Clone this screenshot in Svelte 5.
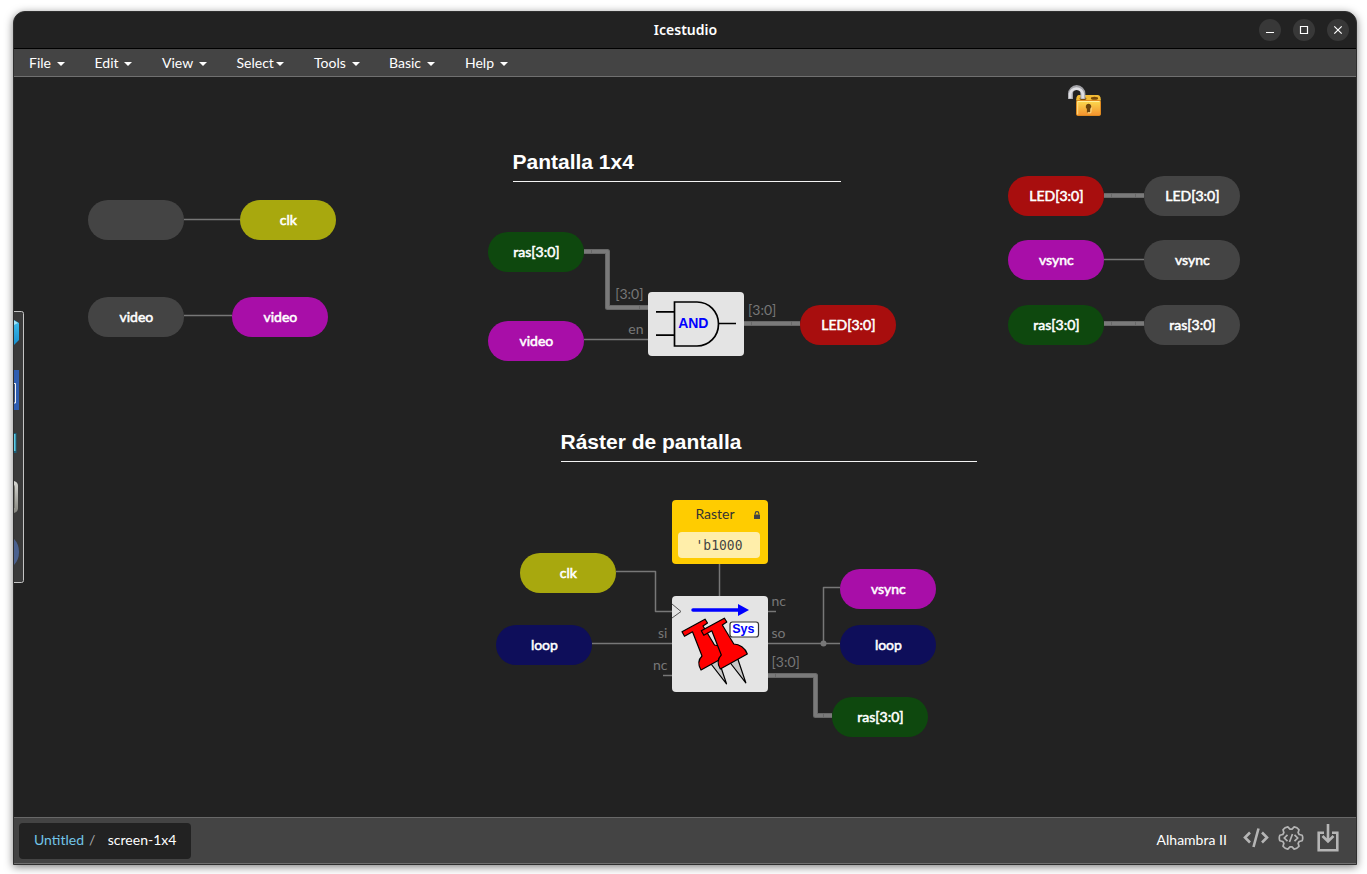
<script>
  const menus = [
    { label: 'File', width: 65.5 },
    { label: 'Edit', width: 67.5 },
    { label: 'View', width: 74.5 },
    { label: 'Select', width: 77.5, tight: true },
    { label: 'Tools', width: 75 },
    { label: 'Basic', width: 76 },
    { label: 'Help', width: 73 }
  ];

  const colors = {
    gray: '#444444',
    yellow: '#a8a80e',
    fuchsia: '#a80ea8',
    green: '#0e480e',
    red: '#a80e0e',
    navy: '#0e0e5a'
  };

  const pills = [
    { x: 88, y: 200, text: '', color: 'gray' },
    { x: 240, y: 200, text: 'clk', color: 'yellow' },
    { x: 88, y: 297, text: 'video', color: 'gray' },
    { x: 232, y: 297, text: 'video', color: 'fuchsia' },
    { x: 488, y: 232, text: 'ras[3:0]', color: 'green' },
    { x: 488, y: 321, text: 'video', color: 'fuchsia' },
    { x: 800, y: 305, text: 'LED[3:0]', color: 'red' },
    { x: 1008, y: 176, text: 'LED[3:0]', color: 'red' },
    { x: 1144, y: 176, text: 'LED[3:0]', color: 'gray' },
    { x: 1008, y: 240, text: 'vsync', color: 'fuchsia' },
    { x: 1144, y: 240, text: 'vsync', color: 'gray' },
    { x: 1008, y: 305, text: 'ras[3:0]', color: 'green' },
    { x: 1144, y: 305, text: 'ras[3:0]', color: 'gray' },
    { x: 520, y: 553, text: 'clk', color: 'yellow' },
    { x: 496, y: 625, text: 'loop', color: 'navy' },
    { x: 840, y: 569, text: 'vsync', color: 'fuchsia' },
    { x: 840, y: 625, text: 'loop', color: 'navy' },
    { x: 832, y: 697, text: 'ras[3:0]', color: 'green' }
  ];

  const wires = [
    'M184 219.5H240',
    'M184 315.5H232',
    'M584 339.5H648',
    'M1104 259.5H1144',
    'M616 571.5H655.5V611.5H672',
    'M592 643.5H672',
    'M663 675.5H672',
    'M719.5 564V596',
    'M768 611.5H776',
    'M768 643.5H840',
    'M823.5 643.5V587.5H840'
  ];

  const buses = [
    'M584 251.5H607.5V307.5H648',
    'M744 323.5H800',
    'M1104 195.5H1144',
    'M1104 323.5H1144',
    'M768 675.5H815.5V715.5H832'
  ];

  // seams where a wire leaves the port stub
  const seams = [
    [591.5, 251.5], [639.5, 307.5], [751.5, 323.5], [791.5, 323.5],
    [1111.5, 195.5], [1135.5, 195.5], [1111.5, 323.5], [1135.5, 323.5],
    [775.5, 675.5], [823.5, 715.5]
  ];

  const ports = [
    { x: 643.5, y: 299, text: '[3:0]', end: true },
    { x: 643.5, y: 334, text: 'en', end: true },
    { x: 748, y: 315, text: '[3:0]' },
    { x: 667.5, y: 638, text: 'si', end: true },
    { x: 667.5, y: 670, text: 'nc', end: true },
    { x: 771.5, y: 606, text: 'nc' },
    { x: 771.5, y: 638, text: 'so' },
    { x: 771.5, y: 667, text: '[3:0]' }
  ];

  const at = (deg, r) => {
    const a = (deg * Math.PI) / 180;
    return `${(13 + r * Math.cos(a)).toFixed(2)} ${(13 + r * Math.sin(a)).toFixed(2)}`;
  };
  const gear =
    'M' +
    [0, 60, 120, 180, 240, 300]
      .map((t) => `${at(t - 23, 8.9)}L${at(t - 14, 11.5)}Q${at(t, 12.3)} ${at(t + 14, 11.5)}L${at(t + 23, 8.9)}`)
      .join('L') +
    'Z';
</script>

<div class="desktop">
  <div class="window">
    <header class="titlebar">
      <span class="title">Icestudio</span>
      <div class="controls">
        <span class="control"><svg viewBox="0 0 22 22"><path d="M7 13.5h8" /></svg></span>
        <span class="control"><svg viewBox="0 0 22 22"><path d="M7.5 7.5h7v7h-7z" /></svg></span>
        <span class="control"><svg viewBox="0 0 22 22"><path d="M7.3 7.3l7.4 7.4M14.7 7.3l-7.4 7.4" /></svg></span>
      </div>
    </header>

    <nav class="menu">
      {#each menus as m}
        <div class="item" class:tight={m.tight} style="width: {m.width}px">
          <span>{m.label}</span><i class="caret"></i>
        </div>
      {/each}
    </nav>

    <main class="canvas">
      <svg class="diagram" viewBox="14 77 1342 740">
        <defs>
          <linearGradient id="gold" x1="0" y1="0" x2="0" y2="1">
            <stop offset="0" stop-color="#fbdc50" />
            <stop offset="1" stop-color="#f4912e" />
          </linearGradient>
          <linearGradient id="cube" x1="0" y1="0" x2="0" y2="1">
            <stop offset="0" stop-color="#41bdea" />
            <stop offset="1" stop-color="#168fd0" />
          </linearGradient>
          <linearGradient id="chrome" x1="0" y1="0" x2="0" y2="1">
            <stop offset="0" stop-color="#d8d8d4" />
            <stop offset="1" stop-color="#85857e" />
          </linearGradient>
        </defs>

        <!-- open padlock -->
        <path d="M1078.5 95h19.5q2 0 2.5 2.5l.5 3h-25l.5-3q.5-2.5 2-2.5z" fill="#f3bb35" />
        <ellipse cx="1094.5" cy="98.3" rx="3.6" ry="1.5" fill="#7a4a08" />
        <ellipse cx="1083" cy="98.7" rx="3.4" ry="1.4" fill="#7a4a08" />
        <path d="M1070.5 99V93.8a6.2 6.2 0 0 1 12.4 0V99" fill="none" stroke="#a2a2a7" stroke-width="5" />
        <path d="M1070.2 98.5V93.8a6.4 6.4 0 0 1 12.6 0V98.5" fill="none" stroke="#dedee2" stroke-width="2.8" />
        <rect x="1076.5" y="100.5" width="24" height="15" rx="1.2" fill="url(#gold)" stroke="#e08a20" />
        <path d="M1077.5 101.5h22" stroke="#fff09a" />
        <path d="M1077.7 102v12.5" stroke="#fde08a" />
        <path d="M1088.5 103.8a2.9 2.9 0 0 1 1.7 5.2v3.5h-3.3V109a2.9 2.9 0 0 1 1.6-5.2z" fill="#6a430d" />
        <path d="M1091.3 107.5l-.5 5.3h-3" stroke="#ffdf8e" fill="none" />

        <!-- side drawer -->
        <path d="M13 311.5H21.5a2 2 0 0 1 2 2V580.5a2 2 0 0 1-2 2H13z" fill="#3a3a3a" stroke="#c4c4c4" />
        <path d="M14 320l5 3v17l-5 5z" fill="url(#cube)" />
        <path d="M14 320.5l4 2.5-4 2z" fill="#a5e2f7" />
        <path d="M14 370h5v40h-5z" fill="#2f5db0" />
        <path d="M14 383.5h1.5v19.5h-1.5" fill="#385590" stroke="#f3f3f3" />
        <path d="M14 433h2.5v20h-2.5z" fill="#1b5f78" />
        <path d="M14 434h1.5v17h-1.5z" fill="#5ecbe5" />
        <path d="M14 481q4 1 4 5v22q0 4-4 5z" fill="url(#chrome)" />
        <path d="M14 485q1 0 1 3v20h-1z" fill="#777770" />
        <path d="M14 539q5 5 5 13t-5 13z" fill="#4b6290" />

        <g class="heading">
          <text x="512.5" y="169">Pantalla 1x4</text>
          <text x="560.5" y="449">Ráster de pantalla</text>
          <path d="M513 181.5H841M561 461.5H977" stroke="#f4f4f4" />
        </g>

        <g fill="none" stroke-linejoin="round">
          {#each wires as d}<path {d} stroke="#777777" stroke-width="1.5" />{/each}
          {#each buses as d}
            <path {d} stroke="#686868" stroke-width="5" />
            <path {d} stroke="#7a7a7a" stroke-width="3" />
          {/each}
          {#each seams as [x, y]}<path d="M{x} {y - 2.5}v5" stroke="#686868" />{/each}
        </g>
        <circle cx="823.5" cy="643.5" r="3" fill="#777777" />

        {#each ports as p}
          <text class="port" x={p.x} y={p.y} text-anchor={p.end ? 'end' : 'start'}>{p.text}</text>
        {/each}

        {#each pills as p}
          <rect x={p.x} y={p.y} width="96" height="40" rx="20" fill={colors[p.color]} />
          {#if p.text}<text class="pill" x={p.x + 48.4} y={p.y + 24.6}>{p.text}</text>{/if}
        {/each}

        <!-- AND gate -->
        <rect x="648" y="292" width="96" height="64" rx="4" fill="#e4e4e4" />
        <path d="M656 311.8H674.5M656 335.2H674.5M718.5 323.5H736M674.5 302H697C709 302 718.5 311.5 718.5 324S709 346 697 346H674.5z" fill="none" stroke="#000" stroke-width="1.7" />
        <text class="blue" x="693.3" y="328" font-size="14">AND</text>

        <!-- constant block -->
        <rect x="672" y="500" width="96" height="64" rx="4" fill="#ffcc00" />
        <rect x="678" y="532" width="82" height="26" rx="4" fill="#ffeeaa" />
        <text class="const" x="715" y="519">Raster</text>
        <text class="value" transform="translate(719 550) scale(1 1.08)">'b1000</text>
        <path d="M755.2 514.5V513.5a1.8 1.8 0 0 1 3.6 0v1" fill="none" stroke="#444" stroke-width="1.2" />
        <rect x="754" y="514.5" width="6" height="4.5" rx=".6" fill="#444" />

        <!-- shift register block -->
        <rect x="672" y="596" width="96" height="96" rx="4" fill="#e4e4e4" />
        <path d="M672 604L681 611.5L672 618" fill="none" stroke="#555" />
        <path d="M693 610H739" stroke="#0000ff" stroke-width="3.5" stroke-linecap="round" />
        <path d="M738 604L749 610L738 616z" fill="#0000ff" />
        {#each [0, 19.3] as dx}
          <g transform="translate({dx} {dx ? -1 : 0})" stroke="#000" stroke-width="1.2" stroke-linejoin="round">
            <path d="M709.5 662L726.5 683.8L717.5 657z" fill="#c8c8c8" />
            <path d="M682 631.8L705 619.2L707.5 623L703 626L714.5 645C720 645 726 649 728 655L701 670C698 665 698 660 702 656L692.5 631.8L684.5 636.3z" fill="#ff0000" />
          </g>
        {/each}
        <rect x="730" y="622" width="28.5" height="15" rx="2.5" fill="#fff" stroke="#333" stroke-width="1.2" />
        <text class="blue" x="743.3" y="633" font-size="12.5">Sys</text>
      </svg>
    </main>

    <footer class="statusbar">
      <div class="crumbs"><span class="root">Untitled</span><span class="slash">/</span><span>screen-1x4</span></div>
      <div class="tools">
        <span class="board">Alhambra II</span>
        <svg class="code" width="26" height="22" viewBox="0 0 26 22" fill="none" stroke="#b5b5b5" stroke-width="2.6"><path d="M7 5.5L2 10.5L7 15.5M19 5.5L24 10.5L19 15.5M15.5 1.5L10.5 20" /></svg>
        <svg class="gear" width="26" height="26" viewBox="0 0 26 26" fill="none" stroke="#b5b5b5" stroke-width="1.7"><path d={gear} stroke-linejoin="round" /><path d="M9.5 9.8L6.3 13L9.5 16.2M16.5 9.8L19.7 13L16.5 16.2M14.5 9L11.5 17" /></svg>
        <svg class="load" width="22" height="28" viewBox="0 0 22 28" fill="none" stroke="#b5b5b5" stroke-width="2.6"><path d="M7 8.7H1.7V26.3H20.3V8.7H15M11 0V17M5.5 12L11 17.5L16.5 12" /></svg>
      </div>
    </footer>
  </div>
</div>

<style>
  :global(body) {
    margin: 0;
    background: #fff;
  }
  .desktop {
    box-sizing: border-box;
    width: 1367px;
    height: 874px;
    padding: 11px 0 0 13px;
    overflow: hidden;
    background: #fff;
  }
  .window {
    box-sizing: border-box;
    width: 1344px;
    height: 854px;
    display: flex;
    flex-direction: column;
    border: 1px solid #303030;
    border-radius: 12px 12px 0 0;
    overflow: hidden;
    background: #222;
    color: #fff;
    font: 14px Lato, sans-serif;
    box-shadow: 0 2px 9px rgba(0, 0, 0, 0.5);
  }
  .titlebar {
    position: relative;
    box-sizing: border-box;
    height: 37px;
    flex: none;
    display: flex;
    align-items: center;
    justify-content: center;
    padding-bottom: 2px;
    border-bottom: 1px solid #000;
  }
  .title {
    font: 600 14px 'Noto Sans', sans-serif;
    padding-left: 1px;
  }
  .controls {
    position: absolute;
    right: 7px;
    top: 7px;
    display: flex;
    gap: 12px;
  }
  .control {
    width: 22px;
    height: 22px;
    border-radius: 50%;
    background: #383838;
  }
  .control svg {
    display: block;
    fill: none;
    stroke: #fff;
    stroke-width: 1.2;
  }
  .menu {
    box-sizing: border-box;
    height: 28px;
    flex: none;
    display: flex;
    padding-left: 15px;
    background: #444;
    border-bottom: 1px solid #707070;
  }
  .item {
    display: flex;
    align-items: center;
    gap: 5.7px;
  }
  .item.tight {
    gap: 2px;
  }
  .caret {
    border: 4px solid transparent;
    border-top-color: #fff;
    border-bottom: 0;
    margin-top: 2px;
  }
  .canvas {
    flex: 1;
    min-height: 0;
  }
  .diagram {
    display: block;
    width: 1342px;
    height: 740px;
  }
  .heading text {
    font: 700 21px 'Liberation Sans', sans-serif;
    fill: #fff;
  }
  .port {
    font: 14px Lato, sans-serif;
    fill: #777;
  }
  .pill {
    font: 14px Lato, sans-serif;
    fill: #fff;
    stroke: #fff;
    stroke-width: 0.55;
    text-anchor: middle;
  }
  .blue {
    font-family: 'Liberation Sans', sans-serif;
    font-weight: 700;
    fill: #0000ff;
    text-anchor: middle;
  }
  .const {
    font: 14px Lato, sans-serif;
    fill: #333;
    text-anchor: middle;
  }
  .value {
    font: 13px 'DejaVu Sans Mono', monospace;
    fill: #444;
    text-anchor: middle;
  }
  .statusbar {
    box-sizing: border-box;
    height: 47px;
    flex: none;
    display: flex;
    align-items: center;
    justify-content: space-between;
    padding: 0 17.2px 0 5px;
    background: #444;
    border-top: 1px solid #686868;
    border-bottom: 1px solid #707070;
  }
  .crumbs {
    box-sizing: border-box;
    width: 172px;
    height: 36px;
    display: flex;
    align-items: center;
    padding: 0 0 2px 15px;
    border-radius: 4px;
    background: #222;
  }
  .root {
    color: #72c5e8;
  }
  .slash {
    color: #aaa;
    margin: 0 12.5px 0 5px;
  }
  .tools {
    display: flex;
    align-items: center;
  }
  .board {
    margin-top: -2px;
  }
  .code {
    margin: -6px 9px 0 16px;
  }
  .gear {
    margin: -6px 13px 0 0;
  }
  .load {
    margin-top: -5px;
  }
</style>
